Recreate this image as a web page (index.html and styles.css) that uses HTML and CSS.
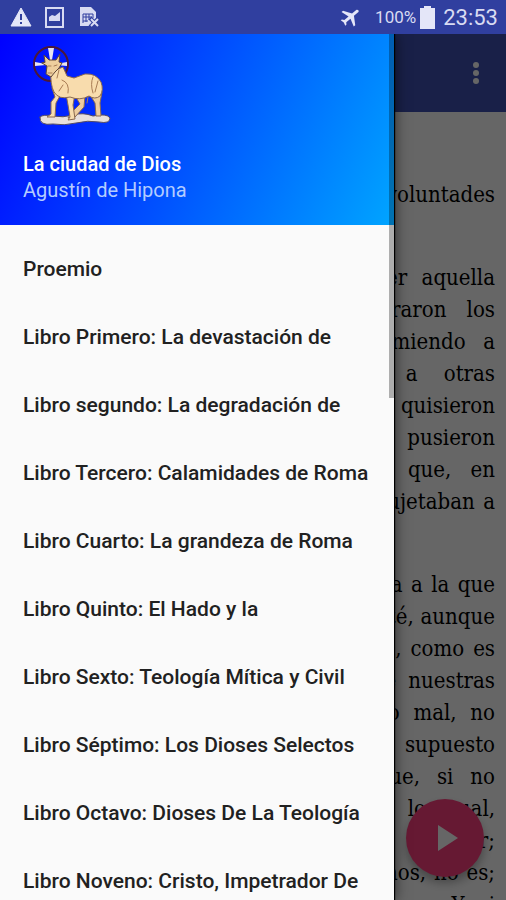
FILE: index.html
```html
<!DOCTYPE html>
<html lang="es">
<head>
  <meta charset="UTF-8" />
  <meta name="viewport" content="width=device-width, initial-scale=1.0"/>
  <title>La ciudad de Dios</title>
  <link rel="stylesheet" href="styles.css">
</head>
<body>
  <header class="status">
    <svg class="status-icon" viewBox="0 0 22 22">
      <path d="M11 2 L21 20 H1 Z" fill="#e4e6f8" stroke="#e4e6f8" stroke-linejoin="round"/>
      <path d="M11 8 V14 M11 16 V18" stroke="#303f9f" stroke-width="2"/>
    </svg>
    <svg class="status-icon" viewBox="0 0 22 22">
      <rect x="2" y="2" width="17" height="19" fill="none" stroke="#d8dbf2" stroke-width="2"/>
      <path d="M5 15 V11 L8 9 L11 10 L16 6 V15 Z" fill="#d8dbf2"/>
    </svg>
    <svg class="status-icon" viewBox="0 0 22 22">
      <path d="M2 1 H13 L18 6 V12 L12 20 H2 Z" fill="#d8dbf2"/>
      <path d="M5 17 V8 H15 V12 M5 11 H14 M8 8 V16 M11 8 V14 M5 15 H10" fill="none" stroke="#303f9f"/>
      <path d="M12 12 L21 21 M21 12 L12 21" stroke="#303f9f" stroke-width="4"/>
      <path d="M13 13 L20 20 M20 13 L13 20" stroke="#d8dbf2" stroke-width="2"/>
    </svg>
    <div class="status-right">
      <svg class="status-icon plane" viewBox="0 0 24 24">
        <path d="M21 16v-2l-8-5V3.500c0-.83-.67-1.500-1.500-1.500S10 2.670 10 3.500V9l-8 5v2l8-2.500V19l-2 1.500V22l3.500-1 3.500 1v-1.500L13 19v-5.500z" fill="#e4e6f8" transform="rotate(50 12 12)"/>
      </svg>
      <span class="percent">100%</span>
      <svg class="battery" viewBox="0 0 15 23">
        <path d="M4 0 H11 V2 H15 V23 H0 V2 H4 Z" fill="#e4e6f8"/>
      </svg>
      <span class="clock">23:53</span>
    </div>
  </header>

  <div class="screen">
    <main class="reader">
      <div class="toolbar">
        <button class="more" aria-label="Más opciones">
          <svg viewBox="0 0 6 24" width="6" height="24">
            <circle cx="3" cy="4" r="3"/><circle cx="3" cy="12" r="3"/><circle cx="3" cy="20" r="3"/>
          </svg>
        </button>
      </div>
      <article class="text">
        <p>Si domina alguna necesidad en las voluntades</p>
        <p>Por lo cual tampoco se debe temer aquella<br>
          necesidad por cuyo temor procuraron los<br>
          estoicos distinguir las causas, eximiendo a<br>
          algunas de ellas, y sujetando a otras<br>
          a ella; y entre las causas que no quisieron<br>
          que dependiesen de necesidad pusieron<br>
          nuestras voluntades, y esto para que, en<br>
          efecto, no dejen de ser libres si se sujetaban a</p>
        <p>Porque si se ha de llamar cosa propia a la que<br>
          no está en nuestra mano, sino que esté, aunque<br>
          no queramos, hace lo que ella puede, como es<br>
          la necesidad de morir, es claro que nuestras<br>
          voluntades, con que se vive bien o mal, no<br>
          están debajo de tal necesidad, supuesto<br>
          ya que hacemos muchas cosas que, si no<br>
          quisiésemos, no las haríamos, a lo cual,<br>
          primero, pertenece el mismo querer;<br>
          porque si queremos, es; si no queremos, no es;<br>
          pues no querríamos, si no lo amamos. Y si</p>
      </article>
      <button class="fab" aria-label="Reproducir">
        <svg viewBox="0 0 20 26" width="20" height="26"><path d="M0 0 L20 13 L0 26 Z"/></svg>
      </button>
    </main>
    <div class="scrim"></div>

    <aside class="drawer">
      <div class="drawer-header">
        <svg class="lamb" viewBox="0 0 80 80" width="80" height="80">
          <g stroke-linejoin="round" stroke-linecap="round">
            <circle cx="20" cy="19" r="17" fill="none" stroke="#4a1838" stroke-width="2"/>
            <path d="M17 3 H23 L21 15 H19 Z M4 17 L15 19 V20 L4 21 Z M36 17 L25 19 V20 L36 21 Z" fill="#e8e4f0"/>
            <path d="M9 72 Q12 69 22 71 T42 70 T62 71 Q76 68 79 73 Q79 79 68 77 T45 78 T22 79 Q8 81 9 72 Z" fill="#e8e0dc" stroke="#554b62"/>
            <path d="M43 49 L49 59 L40 68 L37 73 L44 72 L53 62 L54 51 Z M59 50 L64 58 L65 71 L70 71 L69 58 L71 47 Z" fill="#edcda0" stroke="#8a6a50"/>
            <path d="M21 43 L24 52 L20 57 V69 L16 72 H24 L25 58 L30 49 Z M35 49 L37 60 L39 72 L37 75 L44 74 L42 60 L44 49 Z" fill="#f7ddb0" stroke="#8a6a50"/>
            <path d="M20 27 L32 22 L36 31 L43 33 L54 29 Q65 28 70 37 Q73 45 69 51 Q64 55 58 51 Q49 56 39 52 Q28 55 23 47 Q19 39 20 27 Z" fill="#f8dcad" stroke="#8a6a50"/>
            <path d="M14 17 L13 10 L18 15 L25 15 L29 9 L28 17 L31 18 L28 23 L24 27 L20 32 L15 29 L16 21 L11 18 Z" fill="#edce9e" stroke="#604638"/>
            <path d="M17 21 H20 M23 21 L26 20 M17 28 H21 M28 25 L26 33 M31 35 Q39 38 37 48 M32 40 L28 46 M62 32 Q59 39 62 48 M67 36 L64 47 M57 52 L56 58" fill="none" stroke="#a87c54"/>
          </g>
        </svg>
        <div class="book-title">La ciudad de Dios</div>
        <div class="book-author">Agustín de Hipona</div>
      </div>
      <nav class="chapters">
        <a href="#proemio">Proemio</a>
        <a href="#libro1">Libro Primero: La devastación de</a>
        <a href="#libro2">Libro segundo: La degradación de</a>
        <a href="#libro3">Libro Tercero: Calamidades de Roma</a>
        <a href="#libro4">Libro Cuarto: La grandeza de Roma</a>
        <a href="#libro5">Libro Quinto: El Hado y la</a>
        <a href="#libro6">Libro Sexto: Teología Mítica y Civil</a>
        <a href="#libro7">Libro Séptimo: Los Dioses Selectos</a>
        <a href="#libro8">Libro Octavo: Dioses De La Teología</a>
        <a href="#libro9">Libro Noveno: Cristo, Impetrador De</a>
      </nav>
      <div class="scrollbar"></div>
    </aside>
  </div>
</body>
</html>
```
FILE: styles.css
```css
* {
  box-sizing: border-box;
}

body {
  margin: 0;
  height: 100vh;
  display: flex;
  flex-direction: column;
  overflow: hidden;
  font-family: Roboto, sans-serif;
  background-color: #fff;
}

button {
  border: 0;
  padding: 0;
  cursor: pointer;
}

.status {
  height: 34px;
  flex: none;
  display: flex;
  align-items: center;
  gap: 12px;
  padding: 0 8px 0 10px;
  background-color: #303f9f;
  color: #d8dbf2;
}

.status-icon {
  width: 22px;
  height: 22px;
}

.status-right {
  margin-left: auto;
  display: flex;
  align-items: center;
  gap: 4px;
}

.plane {
  width: 24px;
  height: 24px;
  margin-right: 8px;
}

.percent {
  font-size: 17px;
}

.battery {
  width: 15px;
  height: 23px;
}

.clock {
  font-size: 22px;
  margin-left: 4px;
}

.screen {
  position: relative;
  flex: 1;
  min-height: 0;
  overflow: hidden;
}

.reader {
  height: 100%;
  overflow: hidden;
}

.toolbar {
  height: 78px;
  display: flex;
  align-items: center;
  justify-content: flex-end;
  padding-right: 27px;
  background-color: #3f51b5;
}

.more {
  display: flex;
  background: none;
  fill: #fff;
}

.text {
  padding: 67px 11px 0;
  font-family: "DejaVu Serif Condensed", "DejaVu Serif", serif;
  font-size: 22px;
  line-height: 32px;
  text-align: justify;
  text-align-last: justify;
  white-space: nowrap;
}

.text p {
  margin: 0 0 51px;
}

/* play button floats over the page */
.fab {
  position: absolute;
  right: 22px;
  bottom: 23px;
  width: 78px;
  height: 78px;
  padding-left: 6px;
  display: flex;
  align-items: center;
  justify-content: center;
  border-radius: 50%;
  background-color: #ff4081;
  fill: #fff;
  box-shadow: 0 6px 10px rgba(0, 0, 0, 0.3);
}

.scrim {
  position: absolute;
  inset: 0;
  background-color: rgba(0, 0, 0, 0.6);
}

.drawer {
  position: absolute;
  top: 0;
  bottom: 0;
  left: 0;
  width: calc(100% - 112px);
  overflow: hidden;
  background-color: #fafafa;
  box-shadow: 1px 0 1px #000, 2px 0 12px rgba(0, 0, 0, 0.5);
}

.drawer-header {
  height: 191px;
  padding: 11px 23px 0;
  background: linear-gradient(115deg, #00f, #00a5ff);
  color: #fff;
  font-size: 20px;
  line-height: 26px;
}

.lamb {
  display: block;
  margin: 0 8px 26px;
}

.book-title {
  font-weight: 500;
}

.book-author {
  color: #b3ccff;
}

.chapters {
  padding-top: 10px;
}

.chapters a {
  display: block;
  padding: 0 23px;
  line-height: 68px;
  font-size: 21px;
  font-weight: 500;
  color: #212121;
  text-decoration: none;
  white-space: nowrap;
}

.scrollbar {
  position: absolute;
  top: 0;
  right: 0;
  width: 5px;
  height: 364px;
  background-color: rgba(0, 0, 0, 0.3);
}
```
